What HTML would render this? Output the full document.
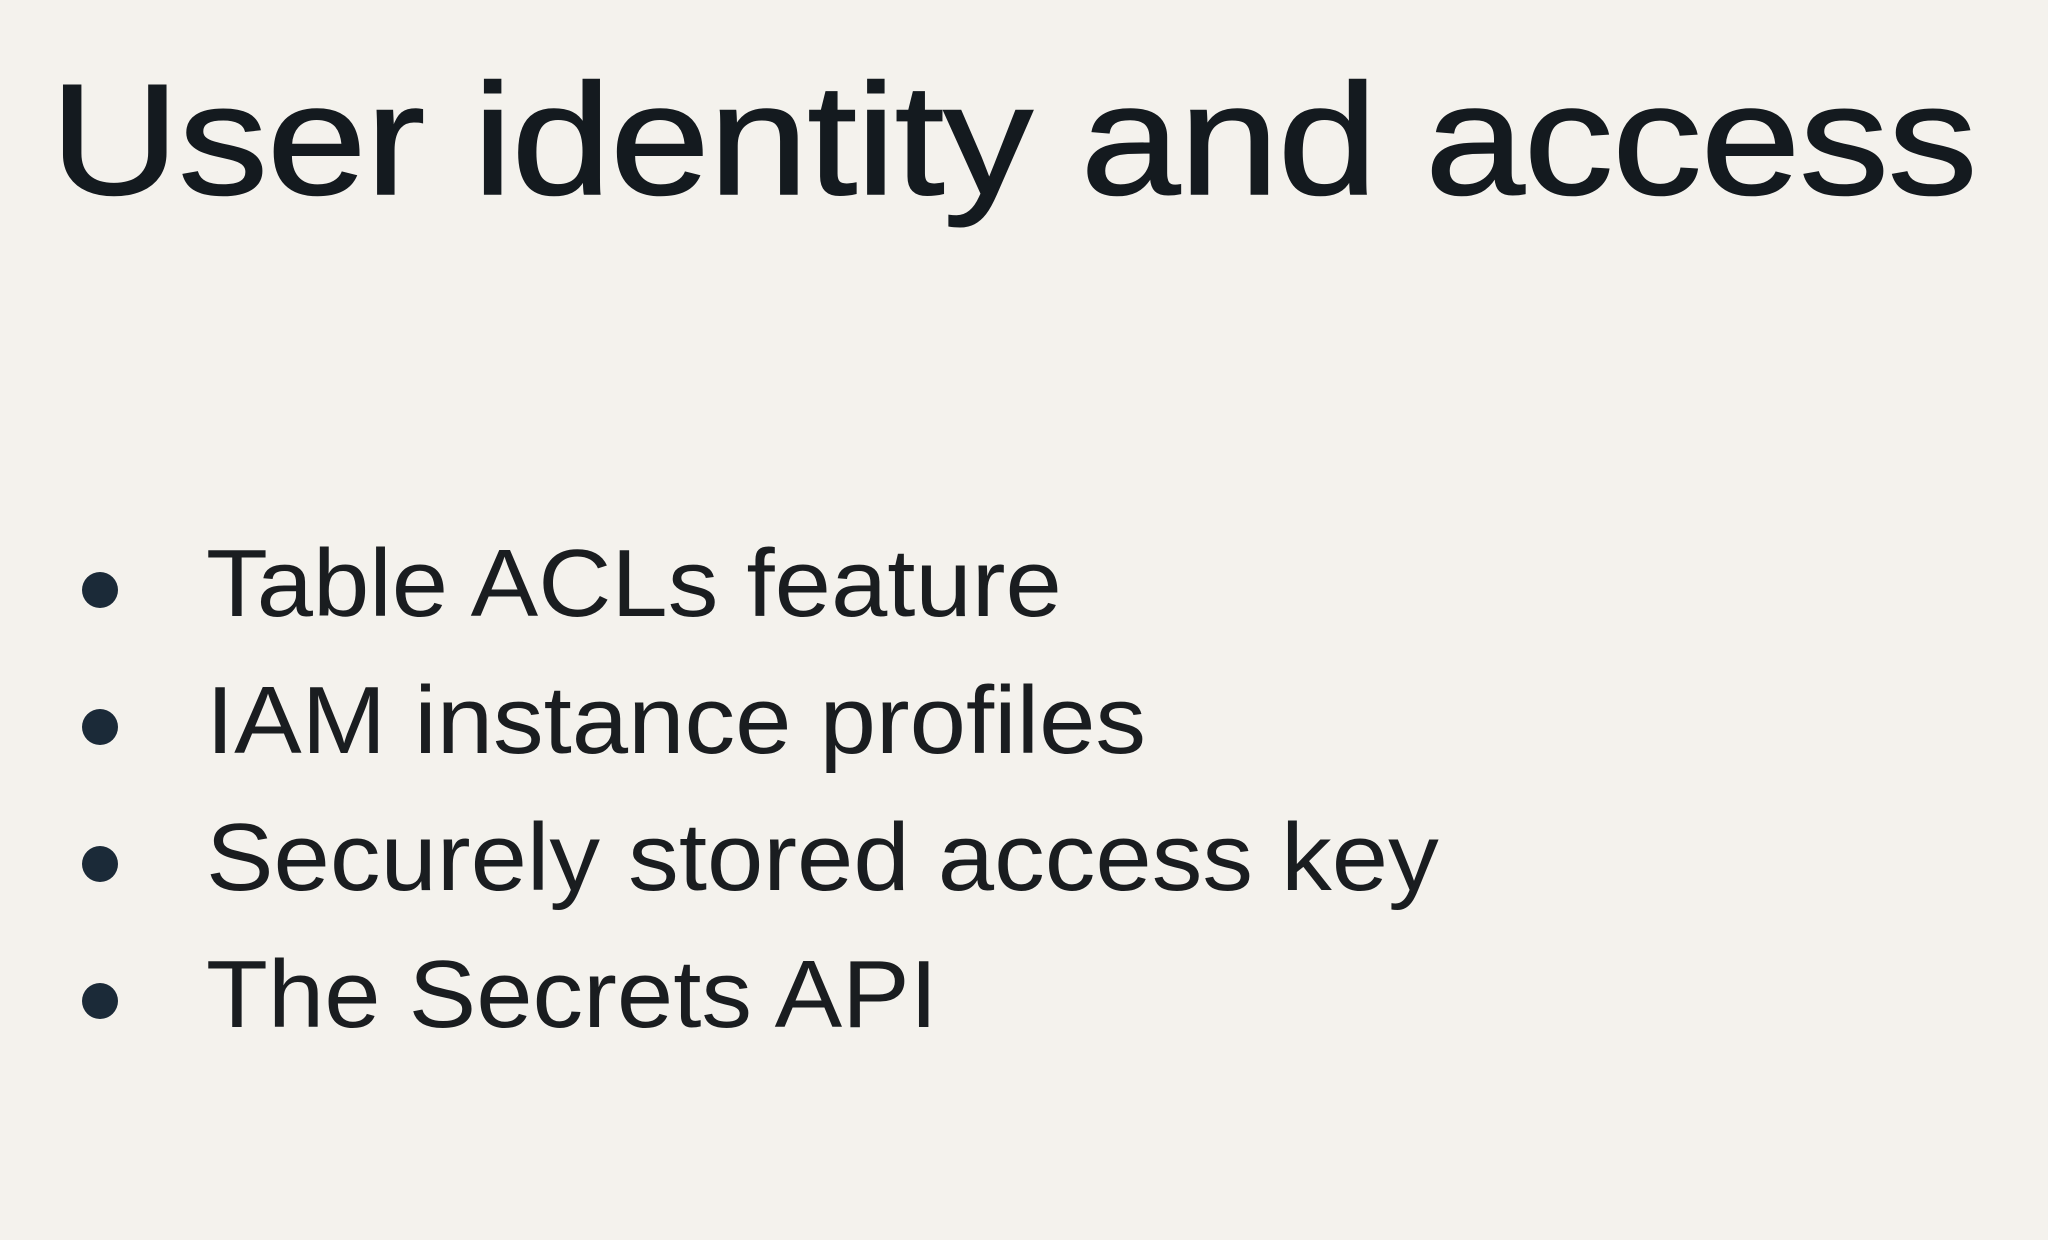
<!DOCTYPE html>
<html><head><meta charset="utf-8"><style>
html,body{margin:0;padding:0}
body{width:2048px;height:1240px;background:#f4f2ed;position:relative;overflow:hidden;font-family:"Liberation Sans",sans-serif;color:#141a1f}
.t{position:absolute;left:50px;top:40px;font-size:158px;line-height:200px;white-space:nowrap;letter-spacing:-1px;transform:scaleX(1.135);transform-origin:left top;-webkit-text-stroke:1.5px #141a1f}
.b{position:absolute;left:206px;font-size:96px;line-height:120px;white-space:nowrap;color:#1a1d20;transform:scaleX(1.055);transform-origin:left top}
.d{position:absolute;left:82px;width:36px;height:36px;border-radius:50%;background:#1b2a38}
</style></head><body>
<div class="t">User identity and access</div>
<div class="d" style="top:572px"></div><div class="b" style="top:524px">Table ACLs feature</div>
<div class="d" style="top:709px"></div><div class="b" style="top:661px">IAM instance profiles</div>
<div class="d" style="top:846px"></div><div class="b" style="top:798px">Securely stored access key</div>
<div class="d" style="top:983px"></div><div class="b" style="top:935px">The Secrets API</div>
</body></html>
